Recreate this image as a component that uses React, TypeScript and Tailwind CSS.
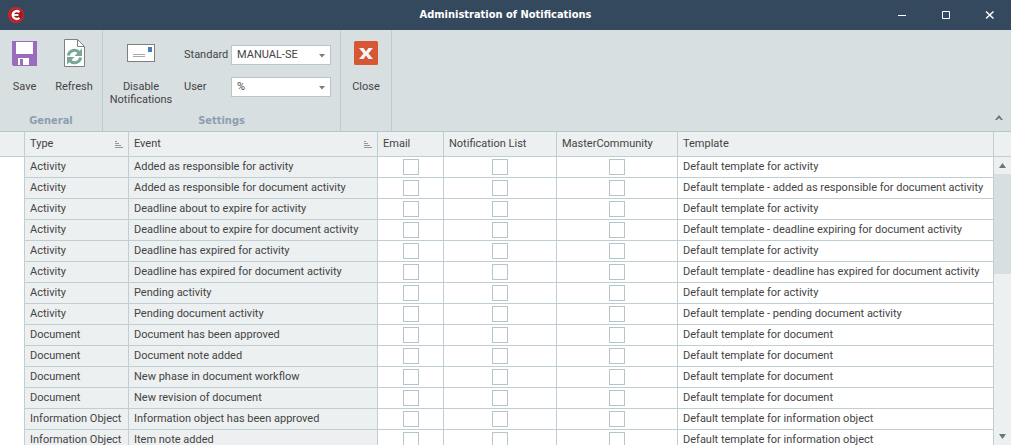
import { useState } from 'react'
import type { ReactNode } from 'react'

interface NotificationRow { type: string; event: string; template: string }

const ROWS: NotificationRow[] = [
  { type: 'Activity', event: 'Added as responsible for activity', template: 'Default template for activity' },
  { type: 'Activity', event: 'Added as responsible for document activity', template: 'Default template - added as responsible for document activity' },
  { type: 'Activity', event: 'Deadline about to expire for activity', template: 'Default template for activity' },
  { type: 'Activity', event: 'Deadline about to expire for document activity', template: 'Default template - deadline expiring for document activity' },
  { type: 'Activity', event: 'Deadline has expired for activity', template: 'Default template for activity' },
  { type: 'Activity', event: 'Deadline has expired for document activity', template: 'Default template - deadline has expired for document activity' },
  { type: 'Activity', event: 'Pending activity', template: 'Default template for activity' },
  { type: 'Activity', event: 'Pending document activity', template: 'Default template - pending document activity' },
  { type: 'Document', event: 'Document has been approved', template: 'Default template for document' },
  { type: 'Document', event: 'Document note added', template: 'Default template for document' },
  { type: 'Document', event: 'New phase in document workflow', template: 'Default template for document' },
  { type: 'Document', event: 'New revision of document', template: 'Default template for document' },
  { type: 'Information Object', event: 'Information object has been approved', template: 'Default template for information object' },
  { type: 'Information Object', event: 'Item note added', template: 'Default template for information object' },
]

const CHANNELS = ['Email', 'Notification List', 'MasterCommunity']

function AppLogo() {
  return (
    <svg width="16" height="16" viewBox="0 0 16 16" aria-hidden="true">
      <circle cx="8" cy="8" r="8" fill="#c9242b" />
      <circle cx="8.500" cy="8" r="6" fill="#a3161c" />
      <path d="M11.500 5.200C9.200 3.200 5 3.800 4.700 8c.3 4.200 4.500 4.800 6.800 2.800" fill="none" stroke="#fff" strokeWidth="2.400" />
      <path d="M5 8h5.500" stroke="#fff" strokeWidth="1.800" />
    </svg>
  )
}

function SaveIcon() {
  return (
    <svg width="25" height="25" viewBox="0 0 25 25" shapeRendering="crispEdges" aria-hidden="true">
      <path d="M0 0h25v25H1l-1-1z" fill="#9b6bbd" />
      <path d="M4 1h17v12H4z" fill="#fff" />
      <path d="M6 17h11v7H6z" fill="#fff" />
      <path d="M8 18h3v6H8z" fill="#9b6bbd" />
    </svg>
  )
}

function RefreshIcon() {
  return (
    <svg width="21" height="28" viewBox="0 0 21 28" aria-hidden="true">
      <path d="M.5.500h13l7 7v20H.5z" fill="#fff" stroke="#7f7f7f" />
      <path d="M13.500.500v7h7" fill="none" stroke="#7f7f7f" />
      <path d="M4.300 16.500a6.300 6.300 0 0 1 11-3" fill="none" stroke="#76a797" strokeWidth="3" />
      <path d="M18 9.500V17h-7.500z" fill="#76a797" />
      <path d="M16.700 18.500a6.300 6.300 0 0 1-11 3" fill="none" stroke="#76a797" strokeWidth="3" />
      <path d="M3 25.500V18h7.500z" fill="#76a797" />
    </svg>
  )
}

function MailIcon() {
  return (
    <svg width="28" height="18" viewBox="0 0 28 18" shapeRendering="crispEdges" aria-hidden="true">
      <path d="M0 0h28v18H0z" fill="#7f7f7f" />
      <path d="M1 1h26v16H1z" fill="#fff" />
      <path d="M21 3h4v5h-4z" fill="#4a7ebb" />
      <path d="M6 10h12v1H6zM6 12h12v1H6z" fill="#a8a8a8" />
    </svg>
  )
}

function CloseIcon() {
  return (
    <svg width="24" height="24" viewBox="0 0 24 24" aria-hidden="true">
      <rect width="24" height="24" rx="1.500" fill="#d75735" />
      <path d="M5 7h4.500l2.500 3.500L14.500 7H19l-4.500 5.500L19 18h-4.500L12 14.500 9.500 18H5l4.500-5.500z" fill="#f5f5f5" />
    </svg>
  )
}

function SortIcon() {
  return (
    <svg width="8" height="7" viewBox="0 0 8 7" shapeRendering="crispEdges" aria-hidden="true">
      <path d="M0 0h2v1H0zM0 2h4v1H0zM0 4h6v1H0zM0 6h8v1H0z" fill="#939799" />
    </svg>
  )
}

function RibbonButton({ icon, label, className }: { icon: ReactNode; label: string; className: string }) {
  return (
    <button type="button" className={`flex flex-col items-center gap-3 ${className}`}>
      <span className="flex h-[30px] items-center justify-center">{icon}</span>
      <span className="leading-[13px]">{label}</span>
    </button>
  )
}

function RibbonGroup({ caption, className, children }: { caption?: string; className: string; children: ReactNode }) {
  return (
    <section className={`flex shrink-0 flex-col justify-between border-r border-[#bfcbd0] pt-2 pb-1 ${className}`}>
      <div className="flex">{children}</div>
      {caption && (
        <h2 className="text-center font-['DejaVu_Sans_Condensed','DejaVu_Sans',sans-serif] text-[11px] leading-[13px] font-bold text-[#8d9db1]">
          {caption}
        </h2>
      )}
    </section>
  )
}

function Combo({ id, label, options }: { id: string; label: string; options: string[] }) {
  return (
    <div className="flex h-5 items-center">
      <label htmlFor={id} className="w-[47px] whitespace-nowrap">{label}</label>
      <div className="relative">
        <select id={id} className="h-5 w-[100px] appearance-none border border-[#b8c6ca] bg-white pr-4 pl-[5px] leading-[18px] outline-none">
          {options.map(o => <option key={o}>{o}</option>)}
        </select>
        <svg className="pointer-events-none absolute top-[9px] right-[6px]" width="6" height="4" viewBox="0 0 6 4" aria-hidden="true">
          <path d="M0 0h6L3 3.500z" fill="#7b7b7b" />
        </svg>
      </div>
    </div>
  )
}

export default function App() {
  const [checked, setChecked] = useState<Record<string, boolean>>({})

  const toggle = (key: string) => setChecked(prev => ({ ...prev, [key]: !prev[key] }))

  return (
    <div className="flex h-screen flex-col overflow-hidden bg-white font-['Roboto',sans-serif] text-[11px] text-[#444]">
      {/* Title bar */}
      <header className="flex h-[30px] shrink-0 items-center bg-[#34495e] text-white">
        <div className="flex w-[131px] pl-2"><AppLogo /></div>
        <h1 className="flex-1 text-center font-['DejaVu_Sans_Condensed','DejaVu_Sans',sans-serif] text-[11px] font-bold">Administration of Notifications</h1>
        <div className="flex w-[131px]">
          <button type="button" aria-label="Minimize" className="flex h-[30px] w-11 items-center justify-center">
            <svg width="8" height="8" viewBox="0 0 8 8" shapeRendering="crispEdges"><path d="M0 4h8v1H0z" fill="#fff" /></svg>
          </button>
          <button type="button" aria-label="Maximize" className="flex h-[30px] w-11 items-center justify-center">
            <svg width="8" height="8" viewBox="0 0 8 8"><path d="M.5.500h7v7h-7z" fill="none" stroke="#fff" /></svg>
          </button>
          <button type="button" aria-label="Close window" className="flex h-[30px] flex-1 items-center justify-center">
            <svg width="9" height="8" viewBox="0 0 9 8"><path d="M1 .500l7.500 7M8.500.500l-7.500 7" stroke="#fff" strokeWidth="1.400" /></svg>
          </button>
        </div>
      </header>

      {/* Ribbon */}
      <div className="flex h-[102px] shrink-0 border-b border-[#b8c6ca] bg-[#d8dfe1]">
        <RibbonGroup caption="General" className="w-[103px]">
          <RibbonButton icon={<SaveIcon />} label="Save" className="w-[49px]" />
          <RibbonButton icon={<RefreshIcon />} label="Refresh" className="w-[50px]" />
        </RibbonGroup>
        <RibbonGroup caption="Settings" className="w-[238px]">
          <RibbonButton icon={<MailIcon />} label="Disable Notifications" className="w-[76px]" />
          <div className="flex flex-col gap-3 pt-[7px] pl-[5px]">
            <Combo id="standard" label="Standard" options={['MANUAL-SE']} />
            <Combo id="user" label="User" options={['%']} />
          </div>
        </RibbonGroup>
        <RibbonGroup className="w-[51px]">
          <RibbonButton icon={<CloseIcon />} label="Close" className="w-full" />
        </RibbonGroup>
        <button type="button" aria-label="Collapse ribbon" className="mt-auto mr-2 mb-[11px] ml-auto">
          <svg width="8" height="5" viewBox="0 0 8 5"><path d="M0 5l4-5 4 5H6L4 3 2 5z" fill="#6f7476" /></svg>
        </button>
      </div>

      {/* Grid */}
      <main className="flex min-h-0 flex-1">
        <div className="min-w-0 flex-1 overflow-hidden">
          <table className="w-full table-fixed border-separate border-spacing-0">
            <colgroup>
              <col className="w-6" />
              <col className="w-[104px]" />
              <col className="w-[249px]" />
              <col className="w-[66px]" />
              <col className="w-[113px]" />
              <col className="w-[121px]" />
              <col />
            </colgroup>
            <thead className="bg-[#ecf0f1] text-left">
              <tr className="h-[25px]">
                <td className="border-b border-[#bfced3]" />
                {['Type', 'Event'].map(name => (
                  <th key={name} scope="col" className="border-b border-l border-[#bfced3] px-[5px] pt-px font-normal">
                    <div className="flex items-center justify-between">{name}<SortIcon /></div>
                  </th>
                ))}
                {[...CHANNELS, 'Template'].map(name => (
                  <th key={name} scope="col" className="border-b border-l border-[#bfced3] px-[5px] pt-px font-normal whitespace-nowrap">{name}</th>
                ))}
              </tr>
            </thead>
            <tbody>
              {ROWS.map(row => (
                <tr key={`${row.type}-${row.event}`} className="h-[21px] whitespace-nowrap">
                  <td />
                  <td className="border-b border-l border-[#bfced3] bg-[#ecf0f1] px-[5px] pt-px">{row.type}</td>
                  <td className="border-b border-l border-[#bfced3] bg-[#ecf0f1] px-[5px] pt-px">{row.event}</td>
                  {CHANNELS.map(channel => {
                    const key = `${row.event}-${channel}`
                    return (
                      <td key={channel} className="border-b border-l border-[#bfced3]">
                        <input
                          type="checkbox"
                          aria-label={`${channel}: ${row.event}`}
                          checked={!!checked[key]}
                          onChange={() => toggle(key)}
                          className="mx-auto block size-4 appearance-none border border-[#b4c4c8] bg-white checked:bg-[#34495e]"
                        />
                      </td>
                    )
                  })}
                  <td className="border-b border-l border-[#bfced3] px-[5px] pt-px">{row.template}</td>
                </tr>
              ))}
            </tbody>
          </table>
        </div>

        {/* Scrollbar */}
        <div className="flex w-[18px] shrink-0 flex-col border-l border-[#bfced3] bg-[#ecf0f1]">
          <div className="h-[25px] shrink-0 border-b border-[#bfced3]" />
          <button type="button" aria-label="Scroll up" className="flex h-[17px] shrink-0 items-center justify-center">
            <svg width="7" height="5" viewBox="0 0 7 5"><path d="M0 5L3.500 0 7 5z" fill="#6f7476" /></svg>
          </button>
          <div className="h-[100px] shrink-0 bg-[#d8dfe1]" />
          <button type="button" aria-label="Scroll down" className="mt-auto flex h-[17px] shrink-0 items-center justify-center">
            <svg width="7" height="5" viewBox="0 0 7 5"><path d="M0 0h7L3.500 5z" fill="#6f7476" /></svg>
          </button>
        </div>
      </main>
    </div>
  )
}
